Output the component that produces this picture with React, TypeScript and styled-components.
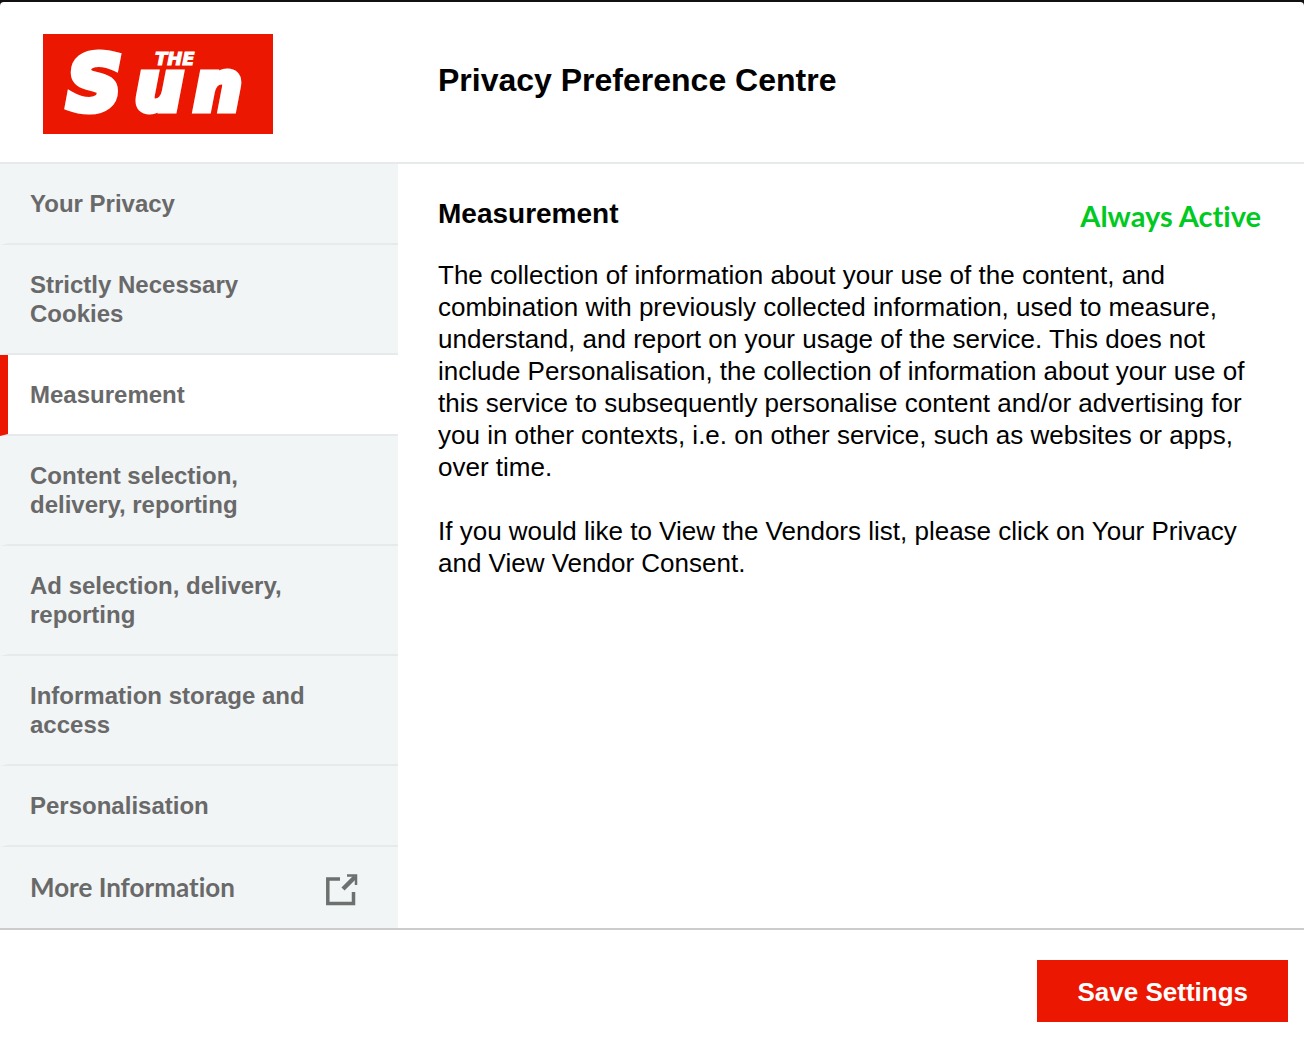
import React from "react";
import styled, { createGlobalStyle } from "styled-components";

const red = "#eb1700";
const sans = '"Liberation Sans", Arial, Helvetica, sans-serif';
const brand = 'Lato, "Open Sans", sans-serif';

const GlobalStyle = createGlobalStyle`
  *, *::before, *::after { box-sizing: border-box; }
  body {
    margin: 0;
    background: #131011;
    font-family: ${sans};
    color: #000;
  }
`;

const Dialog = styled.main`
  display: flex;
  flex-direction: column;
  min-height: calc(100vh - 2px);
  margin-top: 2px;
  background: #fff;
  border-radius: 4px 4px 0 0;
`;

const Header = styled.header`
  display: flex;
  align-items: flex-start;
  padding: 32px 40px 28px 43px;
  border-bottom: 2px solid #e6eaea;
`;

const LogoLink = styled.a`
  display: block;
  flex: 0 0 395px;
  height: 100px;
`;

const Title = styled.h1`
  margin: 0;
  padding-top: 28px;
  font-size: 32px;
  line-height: 36px;
`;

const Body = styled.div`
  display: flex;
  flex: 1;
`;

const Sidebar = styled.nav`
  flex: 0 0 398px;
  background: #f1f5f6;
`;

const TabList = styled.ul`
  margin: 0;
  padding: 0;
  list-style: none;
`;

const Tab = styled.button<{ $active?: boolean }>`
  display: block;
  width: 100%;
  padding: 25px 80px 25px 22px;
  border: 0 solid #e6eaea;
  border-bottom-width: 2px;
  border-left: 8px solid ${(p) => (p.$active ? red : "#f1f5f6")};
  background: ${(p) => (p.$active ? "#fff" : "#f1f5f6")};
  color: #696969;
  font: bold 24px/29px ${sans};
  text-align: left;
  cursor: pointer;
`;

const MoreLink = styled.a`
  display: flex;
  align-items: flex-start;
  justify-content: space-between;
  padding: 27px 40px 20px 30px;
  color: #696969;
  font: 700 26px/26px ${brand};
  font-variant-ligatures: none;
  text-decoration: none;
`;

const Panel = styled.section`
  flex: 1;
  padding: 32px 43px 32px 40px;
`;

const PanelHead = styled.div`
  display: flex;
  justify-content: space-between;
  margin-bottom: 25px;
`;

const PanelTitle = styled.h2`
  margin: 0;
  font-size: 28px;
  line-height: 36px;
`;

const Status = styled.strong`
  padding-top: 2px;
  color: #00c922;
  font: 700 29px/36px ${brand};
  font-variant-ligatures: none;
`;

const Copy = styled.p`
  margin: 0 0 32px;
  font-size: 26px;
  line-height: 32px;
`;

const Footer = styled.footer`
  display: flex;
  justify-content: flex-end;
  padding: 30px 16px 22px;
  border-top: 2px solid #ccc;
`;

const SaveButton = styled.button`
  padding: 16px 40px 14px;
  border: 0;
  background: ${red};
  color: #fff;
  font: bold 26px/32px ${sans};
  cursor: pointer;
`;

const LogoText = styled.text`
  fill: #fff;
  stroke: #fff;
  font-family: "DejaVu Sans", sans-serif;
  font-weight: bold;
  font-style: italic;
`;

const tabs = [
  "Your Privacy",
  "Strictly Necessary Cookies",
  "Measurement",
  "Content selection, delivery, reporting",
  "Ad selection, delivery, reporting",
  "Information storage and access",
  "Personalisation",
];

function Logo() {
  return (
    <svg width="230" height="100" viewBox="0 0 230 100" role="img" aria-label="The Sun">
      <rect width="230" height="100" fill={red} />
      <LogoText y="76" fontSize="76" strokeWidth="7">
        <tspan x="24">S</tspan>
        <tspan x="92" fontSize="67">u</tspan>
        <tspan x="151" fontSize="67">n</tspan>
      </LogoText>
      <LogoText x="112" y="31" fontSize="18" strokeWidth="1">THE</LogoText>
    </svg>
  );
}

function ExternalIcon() {
  return (
    <svg width="32" height="32" viewBox="0 0 32 32" fill="none" stroke="#6d706f" aria-hidden="true">
      <path d="M14 5H1.800V29.500H27.500V18" strokeWidth="3.500" />
      <path d="M17 15L29 3" strokeWidth="4.500" />
      <path d="M21 1.500H30V11" strokeWidth="2.500" />
    </svg>
  );
}

export default function App() {
  const [active, setActive] = React.useState(2);
  return (
    <>
      <GlobalStyle />
      <Dialog>
        <Header>
          <LogoLink href="#">
            <Logo />
          </LogoLink>
          <Title>Privacy Preference Centre</Title>
        </Header>
        <Body>
          <Sidebar>
            <TabList>
              {tabs.map((label, i) => (
                <li key={label}>
                  <Tab type="button" $active={i === active} onClick={() => setActive(i)}>
                    {label}
                  </Tab>
                </li>
              ))}
              <li>
                <MoreLink href="#">
                  More Information
                  <ExternalIcon />
                </MoreLink>
              </li>
            </TabList>
          </Sidebar>
          <Panel>
            <PanelHead>
              <PanelTitle>{tabs[active]}</PanelTitle>
              <Status>Always Active</Status>
            </PanelHead>
            <Copy>
              The collection of information about your use of the content, and combination with
              previously collected information, used to measure, understand, and report on your
              usage of the service. This does not include Personalisation, the collection of
              information about your use of this service to subsequently personalise content and/or
              advertising for you in other contexts, i.e. on other service, such as websites or
              apps, over time.
            </Copy>
            <Copy>
              If you would like to View the Vendors list, please click on Your Privacy and View
              Vendor Consent.
            </Copy>
          </Panel>
        </Body>
        <Footer>
          <SaveButton type="button">Save Settings</SaveButton>
        </Footer>
      </Dialog>
    </>
  );
}
